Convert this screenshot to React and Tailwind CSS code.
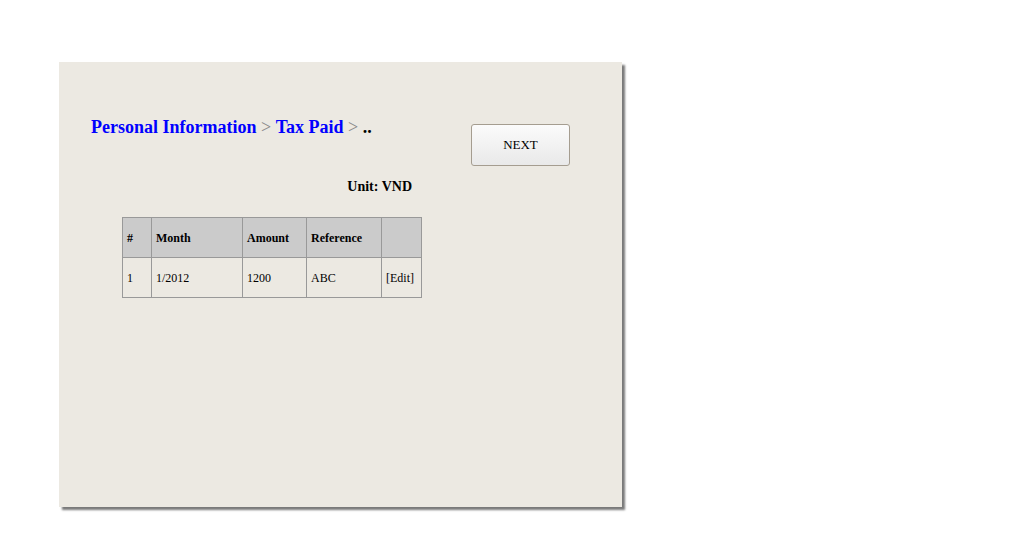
import React from 'react'

const rows = [{ n: '1', month: '1/2012', amount: '1200', ref: 'ABC' }]

const App = () => {
  return (
    <div className="w-[1010px] h-[554px] bg-white pt-[62px] pl-[59px] font-['Liberation_Serif',serif]">
      <div className="w-[563px] h-[445px] bg-[#ece9e2] shadow-[3px_3px_2px_#7a7a7a] relative">
        {/* Header */}
        <div className="flex items-start pt-[55px] pl-[32px] pr-[52px]">
          <div className="text-[18px] font-bold leading-[20px]">
            <span className="text-[#0000ff]">Personal Information</span>
            <span className="text-[#888] font-normal"> &gt; </span>
            <span className="text-[#0000ff]">Tax Paid</span>
            <span className="text-[#888] font-normal"> &gt; </span>
            <span className="text-black">..</span>
          </div>
          <button className="ml-auto mt-[7px] w-[99px] h-[42px] rounded-[3px] border border-[#a59d90] bg-gradient-to-b from-[#fbfbfb] to-[#e9e9e9] text-[13px] text-black">
            NEXT
          </button>
        </div>

        <div className="w-[353px] text-right text-[14px] font-bold leading-[16px] mt-[13px]">Unit: VND</div>

        {/* Table */}
        <table className="ml-[63px] mt-[22px] border-collapse text-[12px] text-left">
          <thead>
            <tr className="bg-[#cbcbcb] h-[40px]">
              <th className="w-[29px] border border-[#999] px-[4px] font-bold">#</th>
              <th className="w-[91px] border border-[#999] px-[4px] font-bold">Month</th>
              <th className="w-[64px] border border-[#999] px-[4px] font-bold">Amount</th>
              <th className="w-[75px] border border-[#999] px-[4px] font-bold">Reference</th>
              <th className="w-[40px] border border-[#999] px-[4px]"></th>
            </tr>
          </thead>
          <tbody>
            {rows.map((r) => (
              <tr key={r.n} className="h-[40px]">
                <td className="border border-[#999] px-[4px]">{r.n}</td>
                <td className="border border-[#999] px-[4px]">{r.month}</td>
                <td className="border border-[#999] px-[4px]">{r.amount}</td>
                <td className="border border-[#999] px-[4px]">{r.ref}</td>
                <td className="border border-[#999] px-[4px]">[Edit]</td>
              </tr>
            ))}
          </tbody>
        </table>
      </div>
    </div>
  )
}

export default App
